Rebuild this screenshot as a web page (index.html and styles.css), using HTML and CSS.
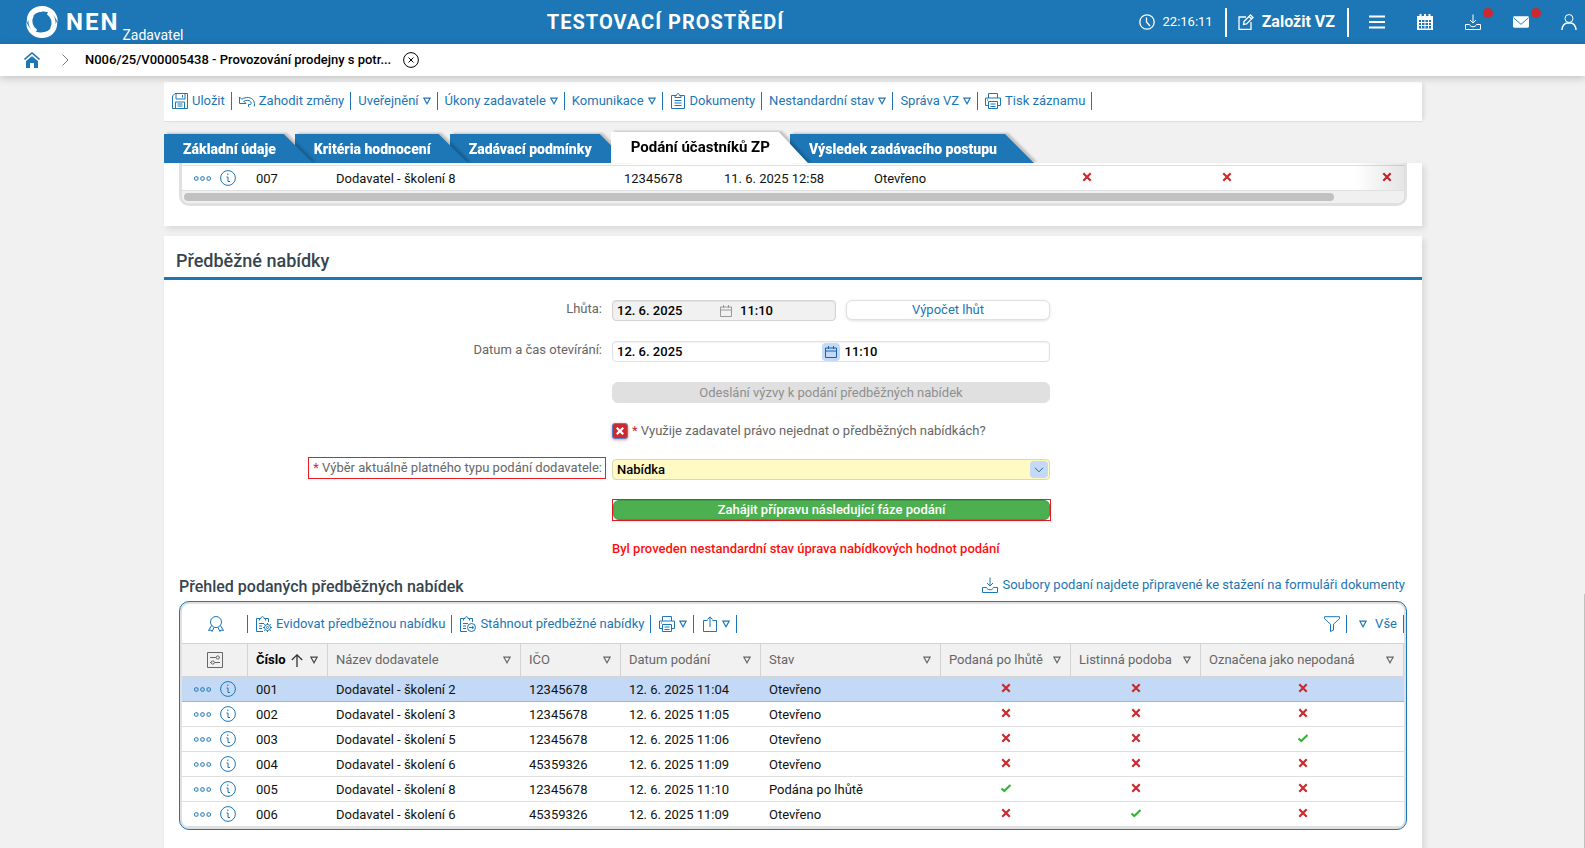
FILE: index.html
```
<!DOCTYPE html>
<html lang="cs">
<head>
    <meta charset="UTF-8">
    <meta name="viewport" content="width=device-width, initial-scale=1.0">
    <title>NEN - Podání účastníků ZP</title>
    <link rel="stylesheet" href="styles.css">
</head>
<body>
    <!-- Icon set -->
    <svg class="sprite" aria-hidden="true">
        <symbol id="i-logo" viewBox="0 0 32 32"><path fill="#fff" d="M1 17C-.5 7 7 0 16 0c5 0 9 2 12 5 3 4 4 7 3.500 11C29 9 23 5 16 5.500 9 6 4 11 1 17zM31 15c1.500 10-6 17-15 17-5 0-9-2-12-5-3-4-4-7-3.500-11C3 23 9 27 16 26.500c7-.5 12-5.500 15-11.500z"/><path fill="none" stroke="#fff" stroke-width="4" d="M16 3.500A12.500 12.500 0 0 0 4.500 11M16 28.500A12.500 12.500 0 0 0 27.500 21M6 9c-3.500 6-1 13 4 16.500M26 23c3.500-6 1-13-4-16.500"/></symbol>
        <symbol id="i-clock" viewBox="0 0 16 16"><circle cx="8" cy="8" r="7.200" stroke-width="1.300"/><path stroke-width="1.300" d="M7.500 3.500V8l3.500 4"/></symbol>
        <symbol id="i-edit" viewBox="0 0 16 16"><path stroke-width="1.300" d="M8 3H1v12.300h12V8M6 7.500 12.500 1l2.500 2.500L8.500 10 5.500 10.500zM11 2.500 13.500 5"/></symbol>
        <symbol id="i-menu" viewBox="0 0 16 16"><path stroke-width="2" d="M0 2.500h16M0 8h16M0 13.500h16"/></symbol>
        <symbol id="i-calendar" viewBox="0 0 16 16"><path fill="#fff" stroke="none" fill-rule="evenodd" d="M0 2h2.500V0h2v2h2.500V0h2v2h2.500V0h2v2H16v14H0zM2 6v8.500h12V6z"/><path d="M4.500 6v8.500M8 6v8.500M11.500 6v8.500M2 8.500h12M2 11.500h12"/></symbol>
        <symbol id="i-inbox" viewBox="0 0 16 16"><path d="M8 .5v8M5 6l3 3 3-3M.5 10.500h4c1 3 6 3 7 0h4v5H.5z"/></symbol>
        <symbol id="i-mail" viewBox="0 0 17 12"><rect width="17" height="12" rx="1.500" fill="#fff" stroke="none"/><path stroke="#1d76b5" d="M.5 1.500 8.500 8.500 16.500 1.500"/></symbol>
        <symbol id="i-user" viewBox="0 0 16 16"><circle cx="8" cy="4.500" r="4"/><path d="M1 16c0-4 2.500-7 5.500-7h3c3 0 5.500 3 5.500 7" stroke-width="1.500"/></symbol>
        <symbol id="i-home" viewBox="0 0 16 16"><path fill="#1d76b5" stroke="none" d="M8 4.200 14 9v7h-4v-5H6v5H2V9z"/><path stroke="#1d76b5" stroke-width="1.600" d="M.5 7.500 8 1l7.500 6.500"/></symbol>
        <symbol id="i-chevron" viewBox="0 0 7 12"><path d="M.5.500 6 6 .5 11.500"/></symbol>
        <symbol id="i-close" viewBox="0 0 16 16"><circle cx="8" cy="8" r="7.400"/><path d="m5.500 5.500 5 5M10.500 5.500l-5 5"/></symbol>
        <symbol id="i-save" viewBox="0 0 16 16"><path d="M3 .5h12.500v15H.5V3zM4 .5V6h9V.5M10.500 2v2.500M3.500 15.500V9h9v6.500M5.500 11h5M5.500 13h5"/></symbol>
        <symbol id="i-undo" viewBox="0 0 16 16"><path d="M.5 4v6.500H7L4.800 8.300c2.700-1.600 5.700-1.300 7 .7.800 1.200.4 2.500-.8 2.500H9.500v2l1 .8M.5 4l2.200 2.200C7 3.500 12.500 4 14.500 7.500c1 2 1.300 4 .8 6"/></symbol>
        <symbol id="i-clipboard" viewBox="0 0 14 16"><path d="M4 2.500H.5v13h13v-13H10M4 4.500v-2h1.500C5.500 0 8.500 0 8.500 2.500H10v2zM3.500 7.500h7M3.500 10h7M3.500 12.500h7"/></symbol>
        <symbol id="i-print" viewBox="0 0 16 16"><path d="M3.500 5V.5h9V5M3.500 12.500h-3V5h15v7.500h-3M3.500 8.500h9v7h-9zM5.500 11h5M5.500 13.500h5M2 7h1"/></symbol>
        <symbol id="i-tri" viewBox="0 0 8 8"><path stroke-width="1.200" d="M.9 1.200h6.200L4 6.800z"/></symbol>
        <symbol id="i-date" viewBox="0 0 12 12"><path d="M.5 2h11v9.500H.5zM.5 5h11M3.500 0v3M8.500 0v3"/></symbol>
        <symbol id="i-down" viewBox="0 0 10 6"><path d="m1 .8 4 4 4-4"/></symbol>
        <symbol id="i-award" viewBox="0 0 16 16"><circle cx="8" cy="6" r="5.500"/><path d="M3.500 9.500.5 14.500l2.500-.5 1 1.500 2-4M12.500 9.500l3 5-2.500-.5-1 1.500-2-4"/></symbol>
        <symbol id="i-clip-gear" viewBox="0 0 16 16"><path d="M3.500 2.500h-3v13H7M9.500 2.500h3V6M3.500 4.500v-2H5C5 0 8 0 8 2.500h1.500v2M3 7.500h5M3 10h3M3 12.500h3"/><circle cx="11.500" cy="11.500" r="3"/><circle cx="11.500" cy="11.500" r="1"/><path d="M11.500 7v1.500M11.500 14.500V16M7 11.500h1.500M14.500 11.500H16M8.300 8.300l1 1M13.700 13.700l1 1M14.700 8.300l-1 1M9.300 13.700l-1 1"/></symbol>
        <symbol id="i-clip-arrow" viewBox="0 0 16 16"><path d="M3.500 2.500h-3v13H7M9.500 2.500h3V6M3.500 4.500v-2H5C5 0 8 0 8 2.500h1.500v2M3 7.500h5M3 10h3M3 12.500h3"/><circle cx="11.500" cy="11.500" r="4"/><path d="M9 11.500h4.500M12 9.800l1.700 1.700L12 13.200"/></symbol>
        <symbol id="i-share" viewBox="0 0 14 16"><path d="M4.500 4.500h-4v11h13v-11h-4M7 11V1M4.500 3.500 7 .8l2.500 2.700"/></symbol>
        <symbol id="i-filter" viewBox="0 0 16 16"><path d="M.5.700h15v2l-6 5.500v6l-3 1.300V8.200l-6-5.500z"/></symbol>
        <symbol id="i-columns" viewBox="0 0 16 16"><path d="M.5.500h15v15H.5zM3 5.500h6M12.500 5.500h.5M3 10.500h1M7.500 10.500H13"/><circle cx="10.800" cy="5.500" r="1.600"/><circle cx="5.800" cy="10.500" r="1.600"/></symbol>
        <symbol id="i-up" viewBox="0 0 12 13"><path stroke-width="1.300" d="M6 13V1M.8 6 6 .9 11.200 6"/></symbol>
        <symbol id="i-dots" viewBox="0 0 17 5"><rect x=".6" y=".8" width="3.400" height="3.400" rx="1"/><rect x="6.800" y=".8" width="3.400" height="3.400" rx="1"/><rect x="13" y=".8" width="3.400" height="3.400" rx="1"/></symbol>
        <symbol id="i-info" viewBox="0 0 16 16"><circle cx="8" cy="8" r="7.400"/><path d="M7.800 3.500V5M6.500 7h1.500v4.500h2"/></symbol>
        <symbol id="i-no" viewBox="0 0 10 10"><path stroke="#cb2a2e" stroke-width="2.200" d="m1.300 1.300 7.400 7.400M8.700 1.300 1.300 8.700"/></symbol>
        <symbol id="i-yes" viewBox="0 0 10 10"><path stroke="#35b535" stroke-width="2.200" d="M.5 5.500 3.300 8 9.500 2"/></symbol>
    </svg>

    <header class="topbar">
        <a href="#" class="brand">
            <svg class="logo"><use href="#i-logo"/></svg>
            <span class="brand-name">NEN</span>
            <span class="brand-role">Zadavatel</span>
        </a>
        <div class="env-title">TESTOVACÍ PROSTŘEDÍ</div>
        <div class="topbar-right">
            <div class="clock"><svg class="icon"><use href="#i-clock"/></svg>22:16:11</div>
            <button class="create-btn"><svg class="icon"><use href="#i-edit"/></svg>Založit VZ</button>
            <nav class="top-icons">
                <button aria-label="Menu"><svg class="icon"><use href="#i-menu"/></svg></button>
                <button aria-label="Kalendář"><svg class="icon"><use href="#i-calendar"/></svg></button>
                <button class="has-badge" aria-label="Ke stažení"><svg class="icon"><use href="#i-inbox"/></svg></button>
                <button class="has-badge" aria-label="Zprávy"><svg class="icon"><use href="#i-mail"/></svg></button>
                <button aria-label="Uživatel"><svg class="icon"><use href="#i-user"/></svg></button>
            </nav>
        </div>
    </header>

    <nav class="breadcrumb">
        <a href="#" aria-label="Domů"><svg class="icon"><use href="#i-home"/></svg></a>
        <svg class="crumb-sep"><use href="#i-chevron"/></svg>
        <a href="#" class="crumb">N006/25/V00005438 - Provozování prodejny s potr...</a>
        <button aria-label="Zavřít"><svg class="icon"><use href="#i-close"/></svg></button>
    </nav>

    <main class="content">
        <div class="toolbar">
            <button><svg class="icon"><use href="#i-save"/></svg>Uložit</button>
            <button><svg class="icon"><use href="#i-undo"/></svg>Zahodit změny</button>
            <button>Uveřejnění<svg class="tri"><use href="#i-tri"/></svg></button>
            <button>Úkony zadavatele<svg class="tri"><use href="#i-tri"/></svg></button>
            <button>Komunikace<svg class="tri"><use href="#i-tri"/></svg></button>
            <button><svg class="icon"><use href="#i-clipboard"/></svg>Dokumenty</button>
            <button>Nestandardní stav<svg class="tri"><use href="#i-tri"/></svg></button>
            <button>Správa VZ<svg class="tri"><use href="#i-tri"/></svg></button>
            <button><svg class="icon"><use href="#i-print"/></svg>Tisk záznamu</button>
        </div>

        <nav class="tabs">
            <a href="#" class="tab">Základní údaje</a>
            <a href="#" class="tab">Kritéria hodnocení</a>
            <a href="#" class="tab">Zadávací podmínky</a>
            <a href="#" class="tab active">Podání účastníků ZP</a>
            <a href="#" class="tab">Výsledek zadávacího postupu</a>
        </nav>

        <section class="panel panel-top">
            <div class="scroll-box">
                <table class="grid wide">
                    <colgroup><col class="w-act"><col class="w-num"><col class="w-name-wide"><col class="w-ico"><col class="w-date-wide"><col class="w-state-wide"><col class="w-flag-wide"><col class="w-flag-wide"><col></colgroup>
                    <tbody>
                        <tr>
                            <td class="act"><svg class="dots"><use href="#i-dots"/></svg><svg class="icon"><use href="#i-info"/></svg></td>
                            <td>007</td><td>Dodavatel - školení 8</td><td>12345678</td><td>11. 6. 2025 12:58</td><td>Otevřeno</td>
                            <td class="flag"><svg><use href="#i-no"/></svg></td><td class="flag"><svg><use href="#i-no"/></svg></td><td class="flag"><svg><use href="#i-no"/></svg></td>
                        </tr>
                    </tbody>
                </table>
                <div class="scrollbar"><div class="thumb"></div></div>
            </div>
        </section>

        <section class="panel panel-main">
            <h2>Předběžné nabídky</h2>

            <form class="form">
                <label for="lhuta">Lhůta:</label>
                <div class="row">
                    <div class="datetime readonly">
                        <input id="lhuta" type="text" value="12. 6. 2025" readonly>
                        <svg class="date-icon"><use href="#i-date"/></svg>
                        <input type="text" value="11:10" aria-label="Čas lhůty" readonly>
                    </div>
                    <button type="button" class="btn">Výpočet lhůt</button>
                </div>

                <label for="otevirani">Datum a čas otevírání:</label>
                <div class="datetime">
                    <input id="otevirani" type="text" value="12. 6. 2025">
                    <button type="button" class="date-btn" aria-label="Kalendář"><svg class="date-icon"><use href="#i-date"/></svg></button>
                    <input type="text" value="11:10" aria-label="Čas otevírání">
                </div>

                <button type="button" class="btn btn-disabled" disabled>Odeslání výzvy k podání předběžných nabídek</button>

                <div class="check">
                    <input id="nejednat" type="checkbox">
                    <label for="nejednat"><span class="req">*</span> Využije zadavatel právo nejednat o předběžných nabídkách?</label>
                </div>

                <label for="typ" class="marked"><span class="req">*</span> Výběr aktuálně platného typu podání dodavatele:</label>
                <div class="select">
                    <select id="typ"><option>Nabídka</option></select>
                    <span class="select-arrow"><svg><use href="#i-down"/></svg></span>
                </div>

                <div class="marked-btn">
                    <button type="button" class="btn btn-green">Zahájit přípravu následující fáze podání</button>
                </div>

                <p class="warning">Byl proveden nestandardní stav úprava nabídkových hodnot podání</p>
            </form>

            <div class="list-head">
                <h3>Přehled podaných předběžných nabídek</h3>
                <a href="#"><svg class="icon"><use href="#i-inbox"/></svg>Soubory podaní najdete připravené ke stažení na formuláři dokumenty</a>
            </div>

            <div class="grid-box">
                <div class="grid-inner">
                    <div class="grid-bar">
                        <button class="award" aria-label="Hodnocení"><svg class="icon"><use href="#i-award"/></svg></button>
                        <button><svg class="icon"><use href="#i-clip-gear"/></svg>Evidovat předběžnou nabídku</button>
                        <button><svg class="icon"><use href="#i-clip-arrow"/></svg>Stáhnout předběžné nabídky</button>
                        <button aria-label="Tisk"><svg class="icon"><use href="#i-print"/></svg><svg class="tri"><use href="#i-tri"/></svg></button>
                        <button aria-label="Export"><svg class="icon"><use href="#i-share"/></svg><svg class="tri"><use href="#i-tri"/></svg></button>
                        <button class="push" aria-label="Filtr"><svg class="icon"><use href="#i-filter"/></svg></button>
                        <button class="all"><svg class="tri"><use href="#i-tri"/></svg>Vše</button>
                    </div>
                    <table class="grid">
                        <colgroup><col class="w-act"><col class="w-num"><col class="w-name"><col class="w-ico"><col class="w-date"><col class="w-state"><col class="w-flag"><col class="w-flag"><col></colgroup>
                        <thead>
                            <tr>
                                <th class="cols"><svg class="icon"><use href="#i-columns"/></svg></th>
                                <th class="sorted"><div>Číslo<svg class="sort"><use href="#i-up"/></svg><svg class="tri"><use href="#i-tri"/></svg></div></th>
                                <th><div>Název dodavatele<svg class="tri"><use href="#i-tri"/></svg></div></th>
                                <th><div>IČO<svg class="tri"><use href="#i-tri"/></svg></div></th>
                                <th><div>Datum podání<svg class="tri"><use href="#i-tri"/></svg></div></th>
                                <th><div>Stav<svg class="tri"><use href="#i-tri"/></svg></div></th>
                                <th><div>Podaná po lhůtě<svg class="tri"><use href="#i-tri"/></svg></div></th>
                                <th><div>Listinná podoba<svg class="tri"><use href="#i-tri"/></svg></div></th>
                                <th><div>Označena jako nepodaná<svg class="tri"><use href="#i-tri"/></svg></div></th>
                            </tr>
                        </thead>
                        <tbody>
                            <tr class="selected">
                                <td class="act"><svg class="dots"><use href="#i-dots"/></svg><svg class="icon"><use href="#i-info"/></svg></td>
                                <td>001</td><td>Dodavatel - školení 2</td><td>12345678</td><td>12. 6. 2025 11:04</td><td>Otevřeno</td>
                                <td class="flag"><svg><use href="#i-no"/></svg></td><td class="flag"><svg><use href="#i-no"/></svg></td><td class="flag"><svg><use href="#i-no"/></svg></td>
                            </tr>
                            <tr>
                                <td class="act"><svg class="dots"><use href="#i-dots"/></svg><svg class="icon"><use href="#i-info"/></svg></td>
                                <td>002</td><td>Dodavatel - školení 3</td><td>12345678</td><td>12. 6. 2025 11:05</td><td>Otevřeno</td>
                                <td class="flag"><svg><use href="#i-no"/></svg></td><td class="flag"><svg><use href="#i-no"/></svg></td><td class="flag"><svg><use href="#i-no"/></svg></td>
                            </tr>
                            <tr>
                                <td class="act"><svg class="dots"><use href="#i-dots"/></svg><svg class="icon"><use href="#i-info"/></svg></td>
                                <td>003</td><td>Dodavatel - školení 5</td><td>12345678</td><td>12. 6. 2025 11:06</td><td>Otevřeno</td>
                                <td class="flag"><svg><use href="#i-no"/></svg></td><td class="flag"><svg><use href="#i-no"/></svg></td><td class="flag"><svg><use href="#i-yes"/></svg></td>
                            </tr>
                            <tr>
                                <td class="act"><svg class="dots"><use href="#i-dots"/></svg><svg class="icon"><use href="#i-info"/></svg></td>
                                <td>004</td><td>Dodavatel - školení 6</td><td>45359326</td><td>12. 6. 2025 11:09</td><td>Otevřeno</td>
                                <td class="flag"><svg><use href="#i-no"/></svg></td><td class="flag"><svg><use href="#i-no"/></svg></td><td class="flag"><svg><use href="#i-no"/></svg></td>
                            </tr>
                            <tr>
                                <td class="act"><svg class="dots"><use href="#i-dots"/></svg><svg class="icon"><use href="#i-info"/></svg></td>
                                <td>005</td><td>Dodavatel - školení 8</td><td>12345678</td><td>12. 6. 2025 11:10</td><td>Podána po lhůtě</td>
                                <td class="flag"><svg><use href="#i-yes"/></svg></td><td class="flag"><svg><use href="#i-no"/></svg></td><td class="flag"><svg><use href="#i-no"/></svg></td>
                            </tr>
                            <tr>
                                <td class="act"><svg class="dots"><use href="#i-dots"/></svg><svg class="icon"><use href="#i-info"/></svg></td>
                                <td>006</td><td>Dodavatel - školení 6</td><td>45359326</td><td>12. 6. 2025 11:09</td><td>Otevřeno</td>
                                <td class="flag"><svg><use href="#i-no"/></svg></td><td class="flag"><svg><use href="#i-yes"/></svg></td><td class="flag"><svg><use href="#i-no"/></svg></td>
                            </tr>
                        </tbody>
                    </table>
                </div>
            </div>
        </section>
    </main>
</body>
</html>
```
FILE: styles.css
```
* {
    box-sizing: border-box;
}

body {
    margin: 0;
    min-height: 100vh;
    display: flex;
    flex-direction: column;
    background-color: #f1f1f1;
    font-family: Roboto, sans-serif;
    font-size: 13px;
    line-height: 16px;
    color: #111;
}

/* Page scroll position marker */
body::after {
    content: "";
    position: fixed;
    top: 70vh;
    right: 0;
    bottom: 0;
    width: 1px;
    background-color: #c1c1c1;
}

button, input, select {
    font: inherit;
    margin: 0;
}

button {
    padding: 0;
    border: none;
    background: none;
    color: inherit;
    cursor: pointer;
}

a {
    color: inherit;
    text-decoration: none;
}

svg {
    fill: none;
    stroke: currentColor;
    flex-shrink: 0;
    display: block;
}

.sprite {
    position: absolute;
    width: 0;
    height: 0;
}

.icon {
    width: 16px;
    height: 16px;
}

.tri {
    width: 8px;
    height: 8px;
}

/* Top bar */
.topbar {
    height: 44px;
    display: grid;
    grid-template-columns: 1fr auto 1fr;
    align-items: center;
    padding: 0 8px 0 26px;
    background-color: #1d76b5;
    color: white;
}

.brand {
    display: flex;
    align-items: center;
}

.logo {
    width: 32px;
    height: 32px;
    stroke: none;
}

.brand-name {
    margin-left: 8px;
    font-size: 24px;
    font-weight: bold;
    letter-spacing: 2px;
}

.brand-role {
    margin-left: 3px;
    align-self: flex-end;
    font-size: 14px;
    line-height: 6px;
}

.env-title {
    margin-right: 272px;
    font-size: 20px;
    font-weight: bold;
    letter-spacing: 1px;
}

.topbar-right {
    display: flex;
    align-items: center;
    justify-content: flex-end;
    margin-left: -272px;
}

.clock {
    display: flex;
    align-items: center;
    gap: 8px;
    padding-right: 12px;
}

.create-btn {
    display: flex;
    align-items: center;
    gap: 8px;
    height: 29px;
    padding: 0 12px 0 11px;
    border-left: 2px solid white;
    border-right: 2px solid white;
    font-size: 16px;
    font-weight: bold;
}

.top-icons {
    display: flex;
    gap: 32px;
    margin-left: 20px;
}

.has-badge {
    position: relative;
}

.has-badge::after {
    content: "";
    position: absolute;
    top: -6px;
    right: -12px;
    width: 10px;
    height: 10px;
    border-radius: 50%;
    background-color: #cb2a2e;
}

/* Breadcrumb */
.breadcrumb {
    position: relative;
    z-index: 5;
    height: 32px;
    display: flex;
    align-items: center;
    padding-left: 24px;
    background-color: white;
    box-shadow: 0 2px 8px rgba(0, 0, 0, 0.2);
    color: black;
}

.crumb-sep {
    width: 7px;
    height: 12px;
    margin: 0 16px 0 22px;
    color: #777;
}

.crumb {
    margin-right: 12px;
    font-weight: 500;
}

.content {
    flex: 1;
    display: flex;
    flex-direction: column;
    padding: 6px 163px 0 164px;
}

/* Record toolbar */
.toolbar {
    height: 40px;
    display: flex;
    align-items: center;
    padding: 0 0 2px 1px;
    background-color: white;
    border-bottom: 1px solid #dfdfdf;
    box-shadow: 4px 0 4px -2px rgba(0, 0, 0, 0.1);
    color: #1d76b5;
}

.toolbar button,
.grid-bar button {
    display: flex;
    align-items: center;
    gap: 4px;
    height: 18px;
    padding: 0 6px 0 7px;
    border-right: 1px solid #1d76b5;
    white-space: nowrap;
}

/* Tabs */
.tabs {
    position: relative;
    z-index: 1;
    height: 41px;
    display: flex;
    align-items: flex-end;
}

.tab {
    position: relative;
    height: 29px;
    padding: 0 19px;
    font-size: 14px;
    line-height: 30px;
    font-weight: 900;
    color: white;
    filter: drop-shadow(3px -1px 1px rgba(0, 0, 0, 0.2));
    white-space: nowrap;
}

.tab::before {
    content: "";
    position: absolute;
    z-index: -1;
    inset: 0 -18px 0 0;
    background-color: #1d76b5;
    clip-path: polygon(0 0, calc(100% - 29px) 0, 100% 100%, 0 100%);
}

.tab:nth-child(1) { z-index: 4; }
.tab:nth-child(2) { z-index: 3; }
.tab:nth-child(3) { z-index: 2; }

.tab.active {
    z-index: 5;
    height: 31px;
    padding: 0 20px;
    font-size: 15px;
    font-weight: bold;
    color: black;
}

.tab.active::before {
    background-color: white;
}

/* Panels */
.panel {
    background-color: white;
    box-shadow: 3px 3px 6px rgba(0, 0, 0, 0.1);
}

.panel-top {
    padding: 0 15px 20px;
    margin-bottom: 10px;
}

.scroll-box {
    position: relative;
    overflow: hidden;
    padding-top: 2px;
    border: 3px solid #dfe0e1;
    border-top: none;
    border-radius: 0 0 10px 10px;
}

.scroll-box::after {
    content: "";
    position: absolute;
    top: 0;
    right: 0;
    bottom: 13px;
    width: 50px;
    background: linear-gradient(to right, rgba(0, 0, 0, 0), rgba(0, 0, 0, 0.1));
}

.scrollbar {
    padding: 2px 70px 2px 2px;
    background-color: #f0f0f0;
}

.thumb {
    height: 8px;
    border-radius: 4px;
    background-color: #c1c1c1;
}

.panel-main {
    flex: 1;
    padding-bottom: 18px;
}

h2 {
    margin: 0;
    padding: 15px 12px 6px;
    border-bottom: 3px solid #1d76b5;
    font-size: 18px;
    line-height: 20px;
    font-weight: 500;
    color: #36454f;
}

/* Form */
.form {
    display: grid;
    grid-template-columns: minmax(0, 438fr) minmax(0, 438fr) minmax(0, 362fr);
    gap: 20px 10px;
    padding: 20px 0 0;
    color: #666;
}

.form > * {
    grid-column: 2;
}

.form > label {
    grid-column: 1;
    justify-self: end;
    height: 16px;
    line-height: 18px;
}

.form > .marked {
    height: 22px;
    margin: -2px -4px -2px 0;
    padding: 0 3px 0 4px;
    border: 1px solid #ed1c24;
    line-height: 20px;
}

.req {
    color: #cb2a2e;
}

.row {
    display: grid;
    grid-template-columns: minmax(0, 224fr) minmax(0, 204fr);
    gap: 10px;
}

.datetime {
    height: 21px;
    display: flex;
    align-items: center;
    padding-left: 4px;
    border: 1px solid #dfe0e1;
    border-radius: 4px;
    box-shadow: inset 0 1px 2px rgba(0, 0, 0, 0.06);
}

.datetime input {
    flex: 1;
    min-width: 0;
    padding: 0;
    border: none;
    outline: none;
    background: none;
    font-weight: 500;
    color: black;
}

.date-icon {
    width: 12px;
    height: 12px;
}

.readonly {
    gap: 8px;
    background-color: #f1f1f1;
    border-color: #d3d3d3;
    color: #999;
}

.date-btn {
    padding: 3px;
    margin-right: 5px;
    border-radius: 4px;
    background-color: #c3d9f5;
    color: #1d5fae;
}

.btn {
    height: 20px;
    border: 1px solid #e0e0e0;
    border-radius: 6px;
    background-color: white;
    box-shadow: 0 1px 3px rgba(0, 0, 0, 0.12);
    color: #1d76b5;
}

.btn-disabled {
    height: 21px;
    background-color: #e0e0e0;
    box-shadow: none;
    color: #8f8f8f;
}

.btn-green {
    display: block;
    width: 100%;
    border: 1px solid #439a46;
    background-color: #4caf50;
    font-weight: 500;
    color: white;
}

.marked-btn {
    margin: -1px -1px 0 0;
    border: 1px solid #ed1c24;
}

.check {
    height: 16px;
    display: flex;
    align-items: center;
    gap: 4px;
}

.check input {
    appearance: none;
    display: grid;
    place-items: center;
    width: 16px;
    height: 16px;
    border: 1px solid #5b7fc4;
    border-radius: 3px;
    background-color: #cb2a2e;
    box-shadow: 0 1px 3px rgba(203, 42, 46, 0.5);
}

.check input::before {
    content: "";
    width: 8px;
    height: 8px;
    background-color: white;
    clip-path: polygon(0 20%, 20% 0, 50% 30%, 80% 0, 100% 20%, 70% 50%, 100% 80%, 80% 100%, 50% 70%, 20% 100%, 0 80%, 30% 50%);
}

.select {
    position: relative;
}

.select select {
    display: block;
    width: 100%;
    height: 21px;
    padding: 0 4px;
    appearance: none;
    border: 1px solid #dcd8ae;
    border-radius: 4px;
    background-color: #fff9c4;
    font-weight: 500;
    color: black;
}

.select-arrow {
    position: absolute;
    top: 2px;
    right: 2px;
    width: 18px;
    height: 17px;
    display: grid;
    place-items: center;
    border-radius: 4px;
    background-color: #c3d9f5;
    color: #1d5fae;
    pointer-events: none;
}

.select-arrow svg {
    width: 10px;
    height: 6px;
}

.warning {
    margin: 0;
    font-weight: 500;
    color: #ff0f0f;
    white-space: nowrap;
}

/* List of bids */
.list-head {
    display: flex;
    justify-content: space-between;
    padding: 20px 17px 4px 15px;
}

.list-head h3 {
    margin: 0;
    font-size: 16px;
    line-height: 20px;
    font-weight: 500;
    color: #36454f;
}

.list-head a {
    display: flex;
    gap: 4px;
    color: #1d76b5;
}

.grid-box {
    margin: 0 15px;
    padding: 2px;
    border: 1px solid #1d76b5;
    border-radius: 10px;
    background-color: #dfe0e1;
}

.grid-inner {
    overflow: hidden;
    border-radius: 7px;
    background-color: white;
}

.grid-bar {
    height: 39px;
    display: flex;
    align-items: center;
    color: #1d76b5;
}

.grid-bar button {
    padding: 0 6px 0 8px;
}

.grid-bar .award {
    width: 66px;
    justify-content: center;
}

.grid-bar .push {
    margin-left: auto;
}

.grid-bar .all {
    gap: 8px;
    padding-left: 12px;
}

.grid {
    width: 100%;
    table-layout: fixed;
    border-collapse: separate;
    border-spacing: 0;
}

.wide {
    width: 106%;
    border-top: 1px solid #dfdfdf;
}

.w-act { width: 66px; }
.w-num { width: 80px; }
.w-name { width: 193px; }
.w-ico { width: 100px; }
.w-date { width: 140px; }
.w-state { width: 180px; }
.w-flag { width: 130px; }
.w-name-wide { width: 288px; }
.w-date-wide { width: 150px; }
.w-state-wide { width: 151px; }
.w-flag-wide { width: 140px; }

.grid th {
    height: 34px;
    padding: 0 9px 0 8px;
    background-color: #f1f1f1;
    border: 1px solid #d3d3d3;
    border-left: none;
    font-weight: normal;
    text-align: left;
    color: #666;
    white-space: nowrap;
}

.grid th div {
    display: flex;
    align-items: center;
}

.grid th .tri {
    margin-left: auto;
}

.grid .sorted {
    font-weight: bold;
    color: black;
}

.grid .sorted .tri {
    color: #444;
}

.sort {
    width: 12px;
    height: 13px;
    margin-left: 5px;
    color: #333;
}

.grid .cols {
    padding: 0;
}

.cols .icon {
    margin: 0 auto;
}

.grid td {
    height: 25px;
    padding: 2px 8px 0;
    border-bottom: 1px solid #dfdfdf;
    white-space: nowrap;
}

.grid tbody tr:last-child td {
    border-bottom-color: #dfe0e1;
}

.selected td {
    background-color: #c3d9f5;
}

.grid .selected td {
    border-bottom-color: #8db9e8;
}

.grid .act {
    padding: 0;
    color: #1d76b5;
}

.act svg {
    display: inline-block;
    vertical-align: middle;
}

.dots {
    width: 17px;
    height: 5px;
    margin: 0 9px 0 12px;
}

.grid .flag {
    padding: 0 8px 2px;
}

.flag svg {
    width: 10px;
    height: 10px;
    margin: 0 auto;
}
```
